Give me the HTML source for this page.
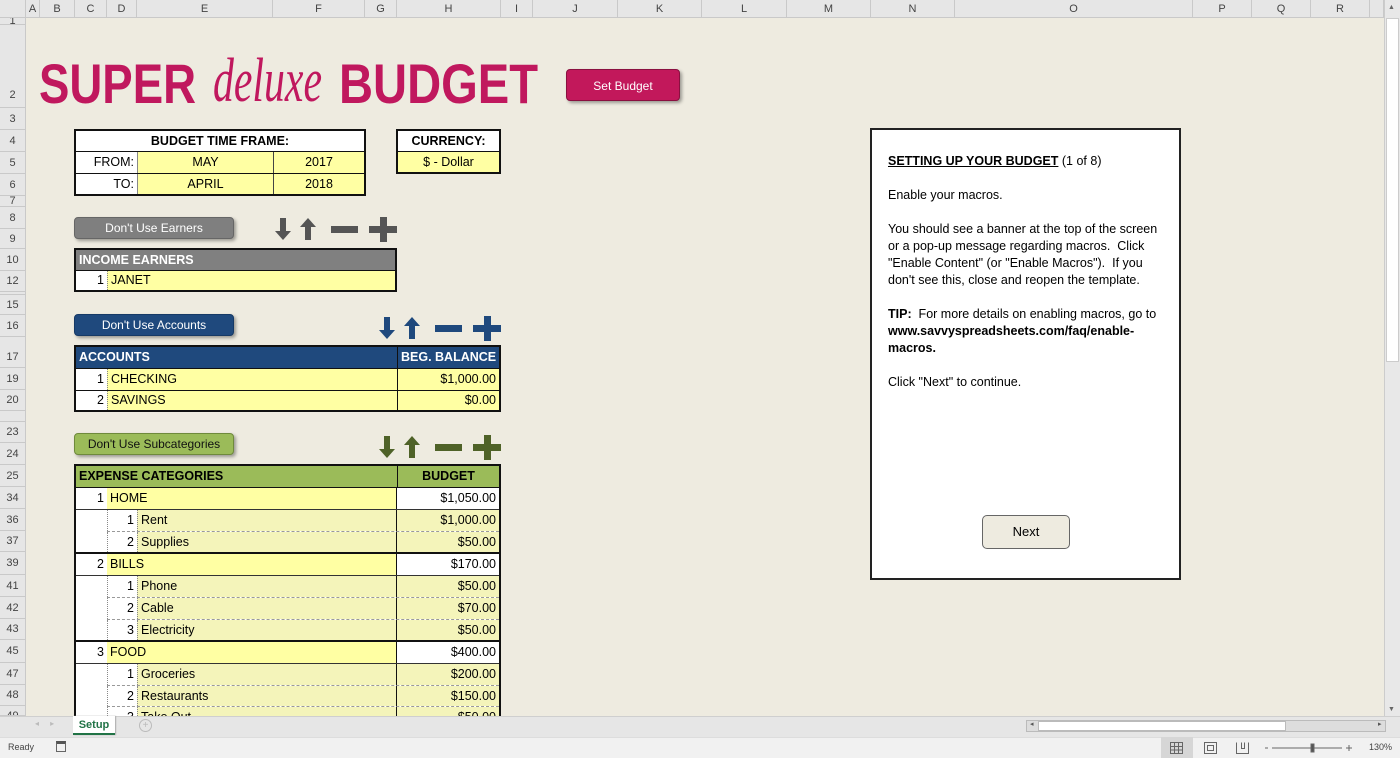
<!DOCTYPE html>
<html><head><meta charset="utf-8"><style>
*{box-sizing:border-box;margin:0;padding:0}
body{width:1400px;height:758px;overflow:hidden;background:#eeebe0;font-family:"Liberation Sans",sans-serif;position:relative;color:#000}
.a{position:absolute}
.ch{position:absolute;top:0;height:18px;background:#e6e6e6;border-right:1px solid #c9c9c9;border-bottom:1px solid #c9c9c9;font-size:11px;color:#444;text-align:center;line-height:18px}
.rh{position:absolute;left:0;width:26px;background:#e6e6e6;border-bottom:1px solid #c9c9c9;border-right:1px solid #c9c9c9;font-size:11px;color:#444;text-align:center;overflow:hidden}
.c{position:absolute;font-size:12.5px;line-height:21px;white-space:nowrap;overflow:hidden;padding:0 3px}
.y{background:#ffffa3}.ly{background:#f4f4ba}.w{background:#fff}
.btn{position:absolute;width:160px;height:22px;border-radius:4px;font-size:12px;text-align:center;line-height:21px;box-shadow:2px 2px 3px rgba(0,0,0,.35)}
.box{position:absolute;border:2px solid #111}
</style></head><body>
<div class="ch" style="left:0;width:26px"></div>
<div class="ch" style="left:26px;width:14px">A</div>
<div class="ch" style="left:40px;width:35px">B</div>
<div class="ch" style="left:75px;width:32px">C</div>
<div class="ch" style="left:107px;width:30px">D</div>
<div class="ch" style="left:137px;width:136px">E</div>
<div class="ch" style="left:273px;width:92px">F</div>
<div class="ch" style="left:365px;width:32px">G</div>
<div class="ch" style="left:397px;width:104px">H</div>
<div class="ch" style="left:501px;width:32px">I</div>
<div class="ch" style="left:533px;width:85px">J</div>
<div class="ch" style="left:618px;width:84px">K</div>
<div class="ch" style="left:702px;width:85px">L</div>
<div class="ch" style="left:787px;width:84px">M</div>
<div class="ch" style="left:871px;width:84px">N</div>
<div class="ch" style="left:955px;width:238px">O</div>
<div class="ch" style="left:1193px;width:59px">P</div>
<div class="ch" style="left:1252px;width:59px">Q</div>
<div class="ch" style="left:1311px;width:59px">R</div>
<div class="ch" style="left:1370px;width:14px"></div>
<div class="rh" style="top:18px;height:7px;line-height:7px">1</div>
<div class="rh" style="top:25px;height:83px;line-height:140px">2</div>
<div class="rh" style="top:108px;height:22px;line-height:22px">3</div>
<div class="rh" style="top:130px;height:22px;line-height:22px">4</div>
<div class="rh" style="top:152px;height:22px;line-height:22px">5</div>
<div class="rh" style="top:174px;height:22px;line-height:22px">6</div>
<div class="rh" style="top:196px;height:11px;line-height:11px">7</div>
<div class="rh" style="top:207px;height:22px;line-height:22px">8</div>
<div class="rh" style="top:229px;height:20px;line-height:20px">9</div>
<div class="rh" style="top:249px;height:22px;line-height:22px">10</div>
<div class="rh" style="top:271px;height:21px;line-height:21px">12</div>
<div class="rh" style="top:292px;height:3px;line-height:3px"></div>
<div class="rh" style="top:295px;height:20px;line-height:20px">15</div>
<div class="rh" style="top:315px;height:22px;line-height:22px">16</div>
<div class="rh" style="top:337px;height:31px;line-height:40px">17</div>
<div class="rh" style="top:368px;height:22px;line-height:22px">19</div>
<div class="rh" style="top:390px;height:21px;line-height:21px">20</div>
<div class="rh" style="top:411px;height:11px"></div>
<div class="rh" style="top:422px;height:21px;line-height:21px">23</div>
<div class="rh" style="top:443px;height:22px;line-height:22px">24</div>
<div class="rh" style="top:465px;height:22px;line-height:22px">25</div>
<div class="rh" style="top:487px;height:22px;line-height:22px">34</div>
<div class="rh" style="top:509px;height:22px;line-height:22px">36</div>
<div class="rh" style="top:531px;height:21px;line-height:21px">37</div>
<div class="rh" style="top:552px;height:23px;line-height:23px">39</div>
<div class="rh" style="top:575px;height:22px;line-height:22px">41</div>
<div class="rh" style="top:597px;height:22px;line-height:22px">42</div>
<div class="rh" style="top:619px;height:21px;line-height:21px">43</div>
<div class="rh" style="top:640px;height:23px;line-height:23px">45</div>
<div class="rh" style="top:663px;height:22px;line-height:22px">47</div>
<div class="rh" style="top:685px;height:21px;line-height:21px">48</div>
<div class="rh" style="top:706px;height:10px;line-height:20px">49</div>

<svg class="a" style="left:0;top:35px" width="560" height="80">
<text x="39" y="68" textLength="157" lengthAdjust="spacingAndGlyphs" font-family="Liberation Sans" font-weight="bold" font-size="56" fill="#c0185e">SUPER</text>
<text x="213" y="66" textLength="109" lengthAdjust="spacingAndGlyphs" font-family="Liberation Serif" font-style="italic" font-size="62" fill="#c0185e">deluxe</text>
<text x="339" y="68" textLength="199" lengthAdjust="spacingAndGlyphs" font-family="Liberation Sans" font-weight="bold" font-size="56" fill="#c0185e">BUDGET</text>
</svg>
<div class="btn" style="left:566px;top:69px;width:114px;height:32px;line-height:32px;background:#c2185b;color:#fff;border:1px solid #8a1040">Set Budget</div>

<div class="box" style="left:74px;top:129px;width:292px;height:67px;background:#fff"></div>
<div class="c" style="left:76px;top:131px;width:288px;text-align:center;font-weight:bold">BUDGET TIME FRAME:</div>
<div class="a" style="left:76px;top:151px;width:288px;border-top:1px solid #111"></div>
<div class="c" style="left:76px;top:152px;width:61px;text-align:right">FROM:</div>
<div class="c y" style="left:137px;top:152px;width:136px;text-align:center;border-left:1px solid #888">MAY</div>
<div class="c y" style="left:273px;top:152px;width:91px;text-align:center;border-left:1px solid #444">2017</div>
<div class="a" style="left:76px;top:173px;width:288px;border-top:1px solid #111"></div>
<div class="c" style="left:76px;top:174px;width:61px;height:20px;line-height:20px;text-align:right">TO:</div>
<div class="c y" style="left:137px;top:174px;width:136px;height:20px;line-height:20px;text-align:center;border-left:1px solid #888">APRIL</div>
<div class="c y" style="left:273px;top:174px;width:91px;height:20px;line-height:20px;text-align:center;border-left:1px solid #444">2018</div>

<div class="box" style="left:396px;top:129px;width:105px;height:45px;background:#fff"></div>
<div class="c" style="left:398px;top:131px;width:101px;text-align:center;font-weight:bold">CURRENCY:</div>
<div class="c y" style="left:398px;top:151px;width:101px;height:21px;line-height:20px;text-align:center;border-top:1px solid #111">$ - Dollar</div>

<div class="btn" style="left:74px;top:217px;background:#7f7f7f;color:#fff;border:1px solid #666">Don't Use Earners</div>
<svg class="a" style="left:270px;top:214px" width="135" height="30" fill="#555">
<path d="M10 4h6v13h5l-8 9-8-9h5z"/><path d="M35 26h6V13h5l-8-9-8 9h5z"/>
<rect x="61" y="12" width="27" height="7"/><path d="M110 3h7v9h10v7h-10v9h-7v-9H99v-7h11z"/>
</svg>
<div class="box" style="left:74px;top:248px;width:323px;height:44px;background:#fff"></div>
<div class="c" style="left:76px;top:250px;width:319px;height:20px;line-height:20px;background:#808080;color:#fff;font-weight:bold">INCOME EARNERS</div>
<div class="a" style="left:76px;top:270px;width:319px;border-top:1px solid #111"></div>
<div class="c" style="left:76px;top:271px;width:31px;height:19px;line-height:19px;text-align:right">1</div>
<div class="c y" style="left:107px;top:271px;width:288px;height:19px;line-height:19px;border-left:1px dotted #888">JANET</div>

<div class="btn" style="left:74px;top:314px;background:#1f497d;color:#fff;border:1px solid #163a66">Don't Use Accounts</div>
<svg class="a" style="left:374px;top:313px" width="135" height="30" fill="#1f497d">
<path d="M10 4h6v13h5l-8 9-8-9h5z"/><path d="M35 26h6V13h5l-8-9-8 9h5z"/>
<rect x="61" y="12" width="27" height="7"/><path d="M110 3h7v9h10v7h-10v9h-7v-9H99v-7h11z"/>
</svg>
<div class="box" style="left:74px;top:345px;width:427px;height:67px;background:#fff"></div>
<div class="c" style="left:76px;top:347px;width:321px;background:#1f497d;color:#fff;font-weight:bold">ACCOUNTS</div>
<div class="c" style="left:397px;top:347px;width:102px;background:#1f497d;color:#fff;font-weight:bold;text-align:center;border-left:1px solid #111">BEG. BALANCE</div>
<div class="a" style="left:76px;top:368px;width:423px;border-top:1px solid #111"></div>
<div class="c" style="left:76px;top:369px;width:31px;text-align:right">1</div>
<div class="c y" style="left:107px;top:369px;width:290px;border-left:1px dotted #888">CHECKING</div>
<div class="c y" style="left:397px;top:369px;width:102px;text-align:right;border-left:1px solid #111">$1,000.00</div>
<div class="a" style="left:76px;top:390px;width:423px;border-top:1px solid #111"></div>
<div class="c" style="left:76px;top:391px;width:31px;height:19px;line-height:19px;text-align:right">2</div>
<div class="c y" style="left:107px;top:391px;width:290px;height:19px;line-height:19px;border-left:1px dotted #888">SAVINGS</div>
<div class="c y" style="left:397px;top:391px;width:102px;height:19px;line-height:19px;text-align:right;border-left:1px solid #111">$0.00</div>

<div class="btn" style="left:74px;top:433px;background:#9bbb59;color:#111;border:1px solid #6f8a3c">Don't Use Subcategories</div>
<svg class="a" style="left:374px;top:432px" width="135" height="30" fill="#4f6228">
<path d="M10 4h6v13h5l-8 9-8-9h5z"/><path d="M35 26h6V13h5l-8-9-8 9h5z"/>
<rect x="61" y="12" width="27" height="7"/><path d="M110 3h7v9h10v7h-10v9h-7v-9H99v-7h11z"/>
</svg>
<div class="a" style="left:74px;top:464px;width:427px;height:260px;border:2px solid #111;border-bottom:none;background:#fff"></div>
<div class="c" style="left:76px;top:466px;width:321px;background:#9bbb59;font-weight:bold">EXPENSE CATEGORIES</div>
<div class="c" style="left:397px;top:466px;width:102px;background:#9bbb59;font-weight:bold;text-align:center;border-left:1px solid #111">BUDGET</div>
<div class="a" style="left:76px;top:487px;width:423px;border-top:1px solid #111"></div>
<div class="a" style="left:396px;top:487px;height:229px;border-left:1px solid #111"></div>

<div class="c" style="left:76px;top:488px;width:31px;text-align:right">1</div>
<div class="c y" style="left:107px;top:488px;width:289px">HOME</div>
<div class="c w" style="left:397px;top:488px;width:102px;text-align:right">$1,050.00</div>
<div class="a" style="left:76px;top:509px;width:423px;border-top:1px solid #333"></div>
<div class="c" style="left:107px;top:510px;width:30px;text-align:right;border-left:1px dotted #888">1</div>
<div class="c ly" style="left:137px;top:510px;width:259px;border-left:1px dotted #888">Rent</div>
<div class="c ly" style="left:397px;top:510px;width:102px;text-align:right">$1,000.00</div>
<div class="a" style="left:107px;top:531px;width:392px;border-top:1px dashed #999"></div>
<div class="c" style="left:107px;top:532px;width:30px;height:20px;line-height:20px;text-align:right;border-left:1px dotted #888">2</div>
<div class="c ly" style="left:137px;top:532px;width:259px;height:20px;line-height:20px;border-left:1px dotted #888">Supplies</div>
<div class="c ly" style="left:397px;top:532px;width:102px;height:20px;line-height:20px;text-align:right">$50.00</div>
<div class="a" style="left:76px;top:552px;width:423px;border-top:2px solid #111"></div>
<div class="c" style="left:76px;top:554px;width:31px;text-align:right">2</div>
<div class="c y" style="left:107px;top:554px;width:289px">BILLS</div>
<div class="c w" style="left:397px;top:554px;width:102px;text-align:right">$170.00</div>
<div class="a" style="left:76px;top:575px;width:423px;border-top:1px solid #333"></div>
<div class="c" style="left:107px;top:576px;width:30px;text-align:right;border-left:1px dotted #888">1</div>
<div class="c ly" style="left:137px;top:576px;width:259px;border-left:1px dotted #888">Phone</div>
<div class="c ly" style="left:397px;top:576px;width:102px;text-align:right">$50.00</div>
<div class="a" style="left:107px;top:597px;width:392px;border-top:1px dashed #999"></div>
<div class="c" style="left:107px;top:598px;width:30px;text-align:right;border-left:1px dotted #888">2</div>
<div class="c ly" style="left:137px;top:598px;width:259px;border-left:1px dotted #888">Cable</div>
<div class="c ly" style="left:397px;top:598px;width:102px;text-align:right">$70.00</div>
<div class="a" style="left:107px;top:619px;width:392px;border-top:1px dashed #999"></div>
<div class="c" style="left:107px;top:620px;width:30px;height:20px;line-height:20px;text-align:right;border-left:1px dotted #888">3</div>
<div class="c ly" style="left:137px;top:620px;width:259px;height:20px;line-height:20px;border-left:1px dotted #888">Electricity</div>
<div class="c ly" style="left:397px;top:620px;width:102px;height:20px;line-height:20px;text-align:right">$50.00</div>
<div class="a" style="left:76px;top:640px;width:423px;border-top:2px solid #111"></div>
<div class="c" style="left:76px;top:642px;width:31px;text-align:right">3</div>
<div class="c y" style="left:107px;top:642px;width:289px">FOOD</div>
<div class="c w" style="left:397px;top:642px;width:102px;text-align:right">$400.00</div>
<div class="a" style="left:76px;top:663px;width:423px;border-top:1px solid #333"></div>
<div class="c" style="left:107px;top:664px;width:30px;text-align:right;border-left:1px dotted #888">1</div>
<div class="c ly" style="left:137px;top:664px;width:259px;border-left:1px dotted #888">Groceries</div>
<div class="c ly" style="left:397px;top:664px;width:102px;text-align:right">$200.00</div>
<div class="a" style="left:107px;top:685px;width:392px;border-top:1px dashed #999"></div>
<div class="c" style="left:107px;top:686px;width:30px;height:20px;line-height:20px;text-align:right;border-left:1px dotted #888">2</div>
<div class="c ly" style="left:137px;top:686px;width:259px;height:20px;line-height:20px;border-left:1px dotted #888">Restaurants</div>
<div class="c ly" style="left:397px;top:686px;width:102px;height:20px;line-height:20px;text-align:right">$150.00</div>
<div class="a" style="left:107px;top:706px;width:392px;border-top:1px dashed #999"></div>
<div class="c" style="left:107px;top:707px;width:30px;height:9px;line-height:20px;text-align:right;border-left:1px dotted #888">3</div>
<div class="c ly" style="left:137px;top:707px;width:259px;height:9px;line-height:20px;border-left:1px dotted #888">Take Out</div>
<div class="c ly" style="left:397px;top:707px;width:102px;height:9px;line-height:20px;text-align:right">$50.00</div>

<div class="a" style="left:870px;top:128px;width:311px;height:452px;background:#fff;border:2px solid #222"></div>
<div class="a" style="left:888px;top:153px;width:290px;font-size:12.5px;line-height:17px;white-space:nowrap">
<div><span style="font-weight:bold;text-decoration:underline">SETTING UP YOUR BUDGET</span> (1 of 8)</div>
<div style="margin-top:17px">Enable your macros.</div>
<div style="margin-top:17px">You should see a banner at the top of the screen<br>or a pop-up message regarding macros.&nbsp; Click<br>"Enable Content" (or "Enable Macros").&nbsp; If you<br>don't see this, close and reopen the template.</div>
<div style="margin-top:17px"><b>TIP:</b>&nbsp; For more details on enabling macros, go to<br><b>www.savvyspreadsheets.com/faq/enable-<br>macros.</b></div>
<div style="margin-top:17px">Click "Next" to continue.</div>
</div>
<div class="a" style="left:982px;top:515px;width:88px;height:34px;border:1px solid #666;border-radius:5px;background:#eeebe0;font-size:13px;text-align:center;line-height:32px">Next</div>

<div class="a" style="left:1384px;top:0;width:16px;height:716px;background:#e8e8e8;border-left:1px solid #ccc"></div>
<div class="a" style="left:1386px;top:18px;width:13px;height:344px;background:#fff;border:1px solid #ccc"></div>
<div class="a" style="left:1388px;top:4px;font-size:7px;color:#666">▲</div>
<div class="a" style="left:1388px;top:706px;font-size:7px;color:#666">▼</div>

<div class="a" style="left:0;top:716px;width:1400px;height:21px;background:#e6e6e6;border-top:1px solid #cfcfcf"></div>
<div class="a" style="left:35px;top:719px;font-size:8px;color:#bbb">◂&nbsp;&nbsp;&nbsp;&nbsp;&nbsp;▸</div>
<div class="a" style="left:73px;top:716px;width:42px;height:19px;background:#fff;border-bottom:2px solid #217346;font-size:11px;font-weight:bold;color:#217346;text-align:center;line-height:18px;box-shadow:1px 0 1px #aaa">Setup</div>
<div class="a" style="left:139px;top:719px;width:13px;height:13px;border:1px solid #bbb;border-radius:50%;font-size:10px;color:#bbb;text-align:center;line-height:11px">+</div>
<div class="a" style="left:1026px;top:720px;width:360px;height:12px;background:#ddd;border:1px solid #bbb"></div>
<div class="a" style="left:1038px;top:721px;width:248px;height:10px;background:#fff;border:1px solid #bbb"></div>
<div class="a" style="left:1030px;top:720px;font-size:7px;color:#555">◂</div>
<div class="a" style="left:1378px;top:720px;font-size:7px;color:#555">▸</div>
<div class="a" style="left:0;top:737px;width:1400px;height:21px;background:#f1f1f1;border-top:1px solid #ddd"></div>
<div class="a" style="left:8px;top:742px;font-size:9px;color:#444">Ready</div>
<div class="a" style="left:56px;top:741px;width:10px;height:11px;border:1px solid #666;border-top:3px solid #555"></div>
<div class="a" style="left:1161px;top:737px;width:32px;height:21px;background:#d6d6d6"></div>
<svg class="a" style="left:1169px;top:741px" width="210" height="14" stroke="#666" fill="none" stroke-width="1">
<rect x="1.5" y="1.5" width="12" height="11"/><path d="M1.5 5.5h12M1.5 9h12M5.5 1.5v11M9.5 1.5v11"/>
<rect x="35.5" y="1.5" width="12" height="11"/><rect x="38.5" y="4.5" width="6" height="5"/>
<path d="M67.5 1.5v11h12v-11M72.5 1.5v6h3v-6"/>
<path d="M96 7h3M103 7h70M177 7h6M180 4v6"/><rect x="142" y="3" width="3" height="8" fill="#555"/>
</svg>
<div class="a" style="left:1369px;top:742px;font-size:9px;color:#444">130%</div>
</body></html>
